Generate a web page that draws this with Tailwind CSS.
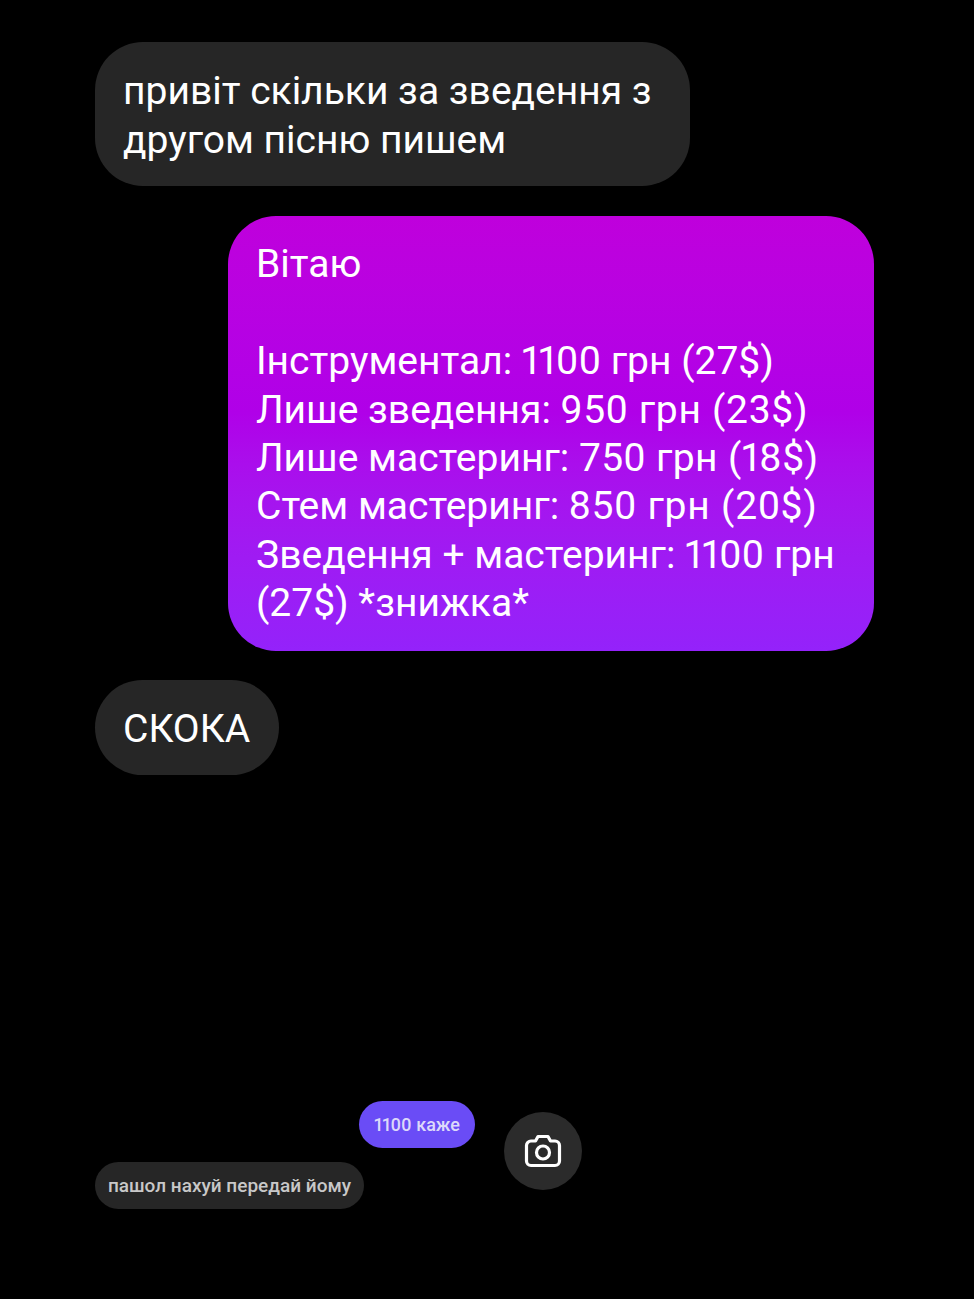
<!DOCTYPE html>
<html lang="uk">
<head>
    <meta charset="UTF-8">
    <meta name="viewport" content="width=device-width, initial-scale=1.0">
    <title>Чат</title>
    <script src="https://cdn.jsdelivr.net/npm/@tailwindcss/browser@4"></script>
</head>
<body class="bg-black">
    <main class="w-[974px] h-[1299px] overflow-hidden bg-black text-white font-['Roboto',sans-serif] text-[39px] leading-[48.5px] pt-[42px] pl-[95px] pr-[100px]">
        <div class="w-[595px] h-[144px] rounded-[48px] bg-[#262626] px-[28px] py-[25px]">
            привіт скільки за зведення з другом пісню пишем
        </div>

        <div class="mt-[30px] ml-[133px] w-[646px] h-[435px] rounded-[48px] bg-gradient-to-b from-[#bf00dc] via-[#b000e8] via-45% to-[#9422fa] px-[28px] pt-[24.4px] leading-[48.4px]">
            <p>Вітаю</p>
            <p class="mt-[48.4px]">Інструментал: <span class="proportional-nums">1100</span> грн (27$)</p>
            <p>Лише зведення: <span class="tracking-[0.7px]">950 грн (23$)</span></p>
            <p>Лише мастеринг: <span class="tracking-[0.4px]">750 грн (<span class="proportional-nums">18</span>$)</span></p>
            <p>Стем мастеринг: <span class="tracking-[0.8px]">850 грн (20$)</span></p>
            <p>Зведення + мастеринг: <span class="proportional-nums">1100</span> грн</p>
            <p>(27$) *знижка*</p>
        </div>

        <div class="mt-[29px] w-[184px] h-[95px] rounded-[48px] bg-[#262626] px-[28px] py-[25px]">СКОКА</div>

        <div class="mt-[326px] -ml-px flex items-start">
            <div class="ml-px w-[269px] mt-[61px] h-[47px] rounded-full bg-[#262626] text-[#c8c8c8] text-[19px] leading-[47px] text-center font-medium">пашол нахуй передай йому</div>
            <div class="-ml-[5px] w-[116px] h-[47px] rounded-full bg-[#6a4cf6] text-[#dcd8fa] text-[18px] leading-[47px] text-center font-medium proportional-nums">1100 каже</div>
            <div class="ml-[29px] mt-[11px] w-[78px] h-[78px] rounded-full bg-[#2b2b2b] flex items-center justify-center">
                <svg width="38" height="34" viewBox="0 0 38 34" fill="none" stroke="white" stroke-width="3.2" stroke-linejoin="round">
                    <path d="M7 7h4.500l2.500-4.500h10L26.500 7H31a4.500 4.500 0 0 1 4.500 4.500V27a4.500 4.500 0 0 1-4.500 4.500H7A4.500 4.500 0 0 1 2.500 27V11.500A4.500 4.500 0 0 1 7 7z"/>
                    <circle cx="19" cy="18.500" r="6.500"/>
                </svg>
            </div>
        </div>
    </main>
</body>
</html>
